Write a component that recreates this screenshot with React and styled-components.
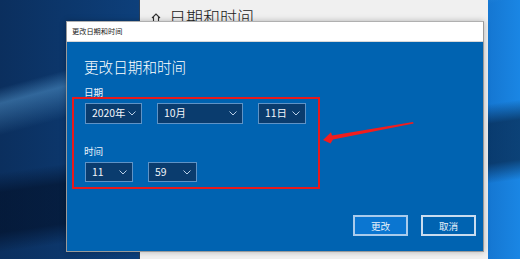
import styled, { createGlobalStyle } from "styled-components";

const GlobalStyle = createGlobalStyle`
  html, body {
    margin: 0;
    padding: 0;
    overflow: hidden;
  }
  body {
    font-family: "Noto Sans CJK SC", "Noto Sans", sans-serif;
  }
`;

const Chevron = () => (
  <svg width="8" height="5" viewBox="0 0 8 5">
    <path d="M0.5 0.5 L4 4 L7.5 0.5" fill="none" stroke="#b9cfe6" strokeWidth="1" />
  </svg>
);

const HomeIcon = () => (
  <svg width="10" height="10" viewBox="0 0 10 10">
    <path d="M1 5 L5 1 L9 5 M2.5 4 V9.5 H7.5 V4" fill="none" stroke="#333" strokeWidth="1.1" />
  </svg>
);

const Select = ({ value, width }) => (
  <SelectBox $width={width}>
    <span>{value}</span>
    <Chevron />
  </SelectBox>
);

const App = () => {
  return (
    <>
      <GlobalStyle />
      <Desktop>
        <SettingsWindow>
          <SettingsHeader>
            <HomeIcon />
            <span>日期和时间</span>
          </SettingsHeader>
        </SettingsWindow>

        <Dialog>
          <TitleBar>更改日期和时间</TitleBar>
          <Body>
            <Heading>更改日期和时间</Heading>
            <Label>日期</Label>
            <SelectRow>
              <Select value="2020年" width={57} />
              <Select value="10月" width={86} />
              <Select value="11日" width={48} />
            </SelectRow>
            <Label $top={22}>时间</Label>
            <SelectRow $height={20}>
              <Select value="11" width={48} />
              <Select value="59" width={49} />
            </SelectRow>
            <Footer>
              <Button $primary>更改</Button>
              <Button>取消</Button>
            </Footer>
          </Body>
        </Dialog>

        <Highlight />
        <Arrow width="520" height="259" viewBox="0 0 520 259">
          <polygon
            points="323,140 331,132.3 332,135.6 413,122 413.6,123.6 333,139.6 330.5,143.5"
            fill="#f21d1d"
          />
        </Arrow>
      </Desktop>
    </>
  );
};

export default App;

const Desktop = styled.div`
  position: relative;
  width: 520px;
  height: 259px;
  overflow: hidden;
  background:
    linear-gradient(172deg, transparent 0 52%, rgba(0, 10, 30, 0.55) 58% 70%, transparent 76%),
    linear-gradient(165deg, transparent 0 22%, rgba(120, 200, 255, 0.35) 26%, transparent 34%),
    linear-gradient(90deg, #0b2f5e 0%, #0d3f7a 26%, #1577d2 94%, #1a86e4 100%);
`;

const SettingsWindow = styled.div`
  position: absolute;
  left: 139px;
  top: 0;
  width: 349px;
  height: 259px;
  background: #f0f0f0;
  border-left: 1px solid #2a3f5a;
  box-sizing: border-box;
`;

const SettingsHeader = styled.div`
  display: flex;
  align-items: center;
  gap: 8px;
  padding: 7px 0 0 11px;
  color: #1a1a1a;
  font-size: 17px;
  line-height: 20px;
  font-weight: 300;
  svg {
    margin-top: 2px;
  }
`;

const Dialog = styled.div`
  position: absolute;
  left: 66px;
  top: 21px;
  width: 418px;
  height: 231px;
  display: flex;
  flex-direction: column;
  border: 1px solid #9a9a9a;
  border-top-color: #b0b0b0;
  box-sizing: border-box;
  background: #0063b1;
  box-shadow: 0 0 6px rgba(0, 0, 0, 0.25);
`;

const TitleBar = styled.div`
  height: 19px;
  flex: none;
  background: #ffffff;
  color: #222;
  font-size: 7.2px;
  line-height: 19px;
  padding-left: 5px;
  border-bottom: 1px solid #d8d8d8;
`;

const Body = styled.div`
  flex: 1;
  display: flex;
  flex-direction: column;
  padding: 17px 7px 15px 16px;
  color: #ffffff;
`;

const Heading = styled.div`
  font-size: 14.6px;
  line-height: 15px;
  font-weight: 300;
  margin-left: 1px;
`;

const Label = styled.div`
  margin-top: ${(p) => p.$top ?? 13}px;
  font-size: 9.6px;
  line-height: 10px;
  color: #eaf2fb;
  margin-left: 1px;
`;

const SelectRow = styled.div`
  display: flex;
  gap: 15px;
  margin-top: 6px;
  margin-left: 2px;
  height: ${(p) => p.$height ?? 21}px;
`;

const SelectBox = styled.div`
  width: ${(p) => p.$width}px;
  height: 100%;
  box-sizing: border-box;
  display: flex;
  align-items: center;
  justify-content: space-between;
  padding: 0 5px 0 6px;
  background: #0a3c6e;
  border: 1px solid #5f93c6;
  font-size: 10.4px;
  color: #f2f6fb;
  span {
    line-height: 1;
  }
`;

const Footer = styled.div`
  margin-top: auto;
  display: flex;
  justify-content: flex-end;
  gap: 13px;
`;

const Button = styled.div`
  width: 55px;
  height: 21px;
  box-sizing: border-box;
  display: flex;
  align-items: center;
  justify-content: center;
  font-size: 9.6px;
  color: #e8f1fa;
  background: ${(p) => (p.$primary ? "#0b76d1" : "transparent")};
  border: 2px solid ${(p) => (p.$primary ? "#a9cbec" : "#c9dcef")};
`;

const Highlight = styled.div`
  position: absolute;
  left: 72px;
  top: 97px;
  width: 248px;
  height: 92px;
  box-sizing: border-box;
  border: 2px solid #e8191c;
`;

const Arrow = styled.svg`
  position: absolute;
  left: 0;
  top: 0;
  pointer-events: none;
`;
